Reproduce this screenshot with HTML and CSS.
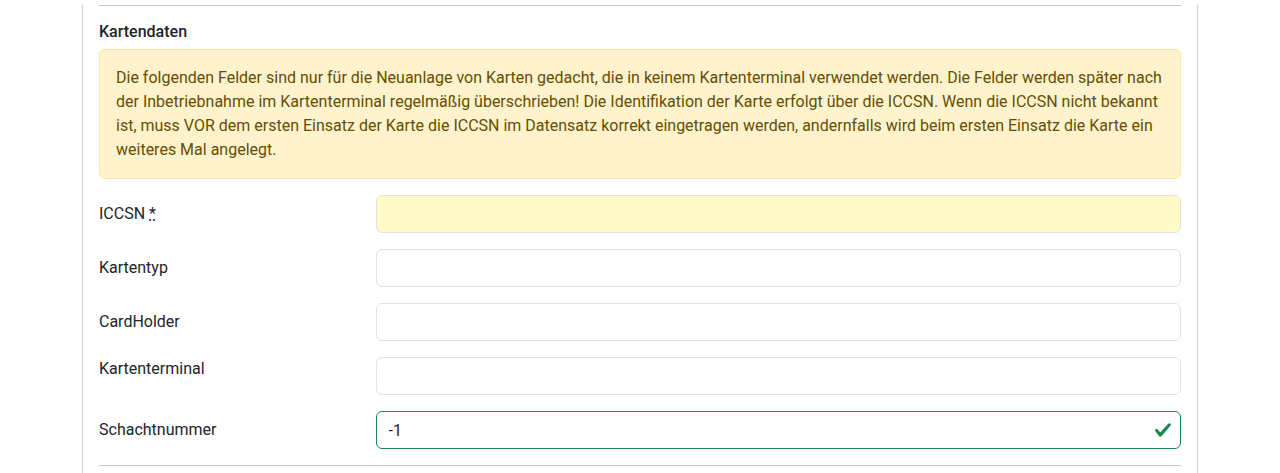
FILE: index.html
```html
<!DOCTYPE html>
<html lang="de">
<head>
<meta charset="utf-8">
<title>Kartendaten</title>
<link rel="stylesheet" href="styles.css">
</head>
<body>
<div class="container">
  <div class="card">
    <div class="card-body">
      <hr class="sep sep-top">
      <h6 class="section-title">Kartendaten</h6>
      <div class="alert">Die folgenden Felder sind nur für die Neuanlage von Karten gedacht, die in keinem Kartenterminal verwendet werden. Die Felder werden später nach der Inbetriebnahme im Kartenterminal regelmäßig überschrieben! Die Identifikation der Karte erfolgt über die ICCSN. Wenn die ICCSN nicht bekannt ist, muss VOR dem ersten Einsatz der Karte die ICCSN im Datensatz korrekt eingetragen werden, andernfalls wird beim ersten Einsatz die Karte ein weiteres Mal angelegt.</div>

      <div class="form-row">
        <label class="col-label">ICCSN <abbr title="Pflichtfeld">*</abbr></label>
        <div class="col-field"><input class="form-control required" type="text" value=""></div>
      </div>
      <div class="form-row">
        <label class="col-label">Kartentyp</label>
        <div class="col-field"><input class="form-control" type="text" value=""></div>
      </div>
      <div class="form-row">
        <label class="col-label">CardHolder</label>
        <div class="col-field"><input class="form-control" type="text" value=""></div>
      </div>
      <div class="form-row">
        <label class="col-label plain">Kartenterminal</label>
        <div class="col-field"><input class="form-control" type="text" value=""></div>
      </div>
      <div class="form-row">
        <label class="col-label">Schachtnummer</label>
        <div class="col-field valid-wrap">
          <input class="form-control is-valid" type="text" value="-1">
          <svg class="valid-icon" viewBox="0 0 8 8" width="18" height="18" aria-hidden="true"><path fill="#198754" d="M2.3 6.73.6 4.53c-.4-1.040.46-1.4 1.1-.8l1.1 1.4 3.4-3.8c.6-.63 1.6-.27 1.2.7l-4 4.6c-.43.5-.8.4-1.1.1z"/></svg>
        </div>
      </div>
      <hr class="sep sep-bottom">
    </div>
  </div>
</div>
</body>
</html>
```
FILE: styles.css
```css
* { box-sizing: border-box; }
html, body { margin: 0; padding: 0; background: #fff; }
body {
  font-family: Roboto, "Liberation Sans", sans-serif;
  font-size: 16px;
  line-height: 1.5;
  color: #212529;
}
.container {
  width: 1140px;
  margin: 0 auto;
  padding: 0 12px;
}
.card {
  border-left: 1px solid rgba(0,0,0,.175);
  border-right: 1px solid rgba(0,0,0,.175);
  height: 473px;
}
.card-body { padding: 0 16px; }
.sep {
  border: 0;
  border-top: 1px solid #212529;
  opacity: .25;
  margin: 0;
}
.sep-top { margin-top: 5px; margin-bottom: 16px; }
.sep-bottom { margin-top: 16px; }
.section-title {
  font-size: 16px;
  font-weight: 500;
  line-height: 1.2;
  margin: 0 0 8px;
}
.alert {
  background: #fff3cd;
  border: 1px solid #ffe69c;
  color: #664d03;
  border-radius: 6px;
  padding: 16px;
  margin-bottom: 16px;
}
.form-row {
  display: grid;
  grid-template-columns: 25% 75%;
  margin: 0 -12px 16px;
}
.form-row:last-of-type { margin-bottom: 0; }
.col-label {
  padding: 7px 12px 0;
}
.col-label.plain { padding-top: 0; }
.col-label abbr {
  text-decoration: underline dotted;
  cursor: help;
}
.col-field { padding: 0 12px; }
.valid-wrap { position: relative; }
.form-control {
  display: block;
  width: 100%;
  height: 38px;
  padding: 6px 12px;
  font: inherit;
  color: #212529;
  background: #fff;
  border: 1px solid #dee2e6;
  border-radius: 6px;
  outline: none;
}
.form-control.required {
  background: #fffac8;
  border-color: #e2e3dc;
}
.form-control.is-valid {
  border-color: #198754;
  padding-right: 40px;
}
.valid-icon {
  position: absolute;
  right: 21px;
  top: 10px;
}
```
